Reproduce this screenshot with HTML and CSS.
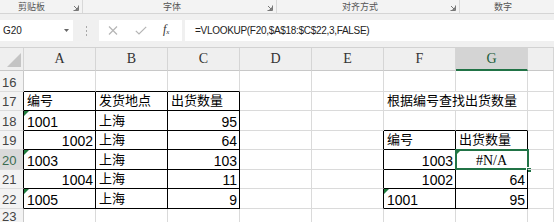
FILE: index.html
```html
<!DOCTYPE html>
<html>
<head>
<meta charset="utf-8">
<link rel="stylesheet" href="styles.css">
</head>
<body>
<div class="ribbon">
  <div class="grp g1"><span class="lbl">剪贴板</span><svg class="launch" width="6" height="6" viewBox="0 0 6 6"><path d="M0.5 5.5H5.5V0.5M1 1L4.5 4.5M4.5 2.5V4.5H2.5" fill="none" stroke="#777" stroke-width="1"/></svg></div>
  <div class="grp g2"><span class="lbl">字体</span><svg class="launch" width="6" height="6" viewBox="0 0 6 6"><path d="M0.5 5.5H5.5V0.5M1 1L4.5 4.5M4.5 2.5V4.5H2.5" fill="none" stroke="#777" stroke-width="1"/></svg></div>
  <div class="grp g3"><span class="lbl">对齐方式</span><svg class="launch" width="6" height="6" viewBox="0 0 6 6"><path d="M0.5 5.5H5.5V0.5M1 1L4.5 4.5M4.5 2.5V4.5H2.5" fill="none" stroke="#777" stroke-width="1"/></svg></div>
  <div class="grp g4"><span class="lbl">数字</span></div>
</div>
<div class="fbar">
  <div class="namebox"><span>G20</span><svg width="5" height="3" viewBox="0 0 5 3"><path d="M0 0H5L2.5 3Z" fill="#666"/></svg></div>
  <div class="dots"><i></i><i></i><i></i></div>
  <div class="fxbox">
    <svg class="ico" width="10" height="9" viewBox="0 0 10 9"><path d="M1 0.5L9 8.5M9 0.5L1 8.5" stroke="#b5b5b5" stroke-width="1.2" fill="none"/></svg>
    <svg class="ico" width="12" height="9" viewBox="0 0 12 9"><path d="M0.8 4.8L4 8L11.2 0.8" stroke="#b5b5b5" stroke-width="1.2" fill="none"/></svg>
    <span class="fx">f<sub>x</sub></span>
  </div>
  <div class="formula">=VLOOKUP(F20,$A$18:$C$22,3,FALSE)</div>
</div>
<div class="grid">
  <div class="h corner"><svg width="14" height="14" viewBox="0 0 14 14"><path d="M14 0V14H0Z" fill="#c4c4c4"/></svg></div>
  <div class="h">A</div><div class="h">B</div><div class="h">C</div><div class="h">D</div><div class="h">E</div><div class="h">F</div><div class="h hs">G</div><div class="h"></div>

  <div class="rh">16</div>
  <div class="c kb"></div><div class="c kb"></div><div class="c kb"></div><div class="c"></div><div class="c"></div><div class="c"></div><div class="c"></div><div class="c"></div>

  <div class="rh kr">17</div>
  <div class="c kr kb cn">编号</div><div class="c kr kb cn">发货地点</div><div class="c kr kb cn">出货数量</div><div class="c"></div><div class="c"></div><div class="c cn span2">根据编号查找出货数量</div><div class="c"></div>

  <div class="rh kr">18</div>
  <div class="c kr kb tri">1001</div><div class="c kr kb cn">上海</div><div class="c kr kb r">95</div><div class="c"></div><div class="c"></div><div class="c kb"></div><div class="c kb"></div><div class="c"></div>

  <div class="rh kr">19</div>
  <div class="c kr kb r">1002</div><div class="c kr kb cn">上海</div><div class="c kr kb r">64</div><div class="c"></div><div class="c kr"></div><div class="c kr kb cn">编号</div><div class="c kr kb cn">出货数量</div><div class="c"></div>

  <div class="rh kr rs">20</div>
  <div class="c kr kb tri">1003</div><div class="c kr kb cn">上海</div><div class="c kr kb r">103</div><div class="c"></div><div class="c kr"></div><div class="c kr kb r">1003</div><div class="c kr kb ctr tri sel"><span class="err">#N/A</span><span class="selbox"></span><span class="handle"></span></div><div class="c"></div>

  <div class="rh kr">21</div>
  <div class="c kr kb r">1004</div><div class="c kr kb cn">上海</div><div class="c kr kb r">11</div><div class="c"></div><div class="c kr"></div><div class="c kr kb r">1002</div><div class="c kr kb r">64</div><div class="c"></div>

  <div class="rh kr">22</div>
  <div class="c kr kb tri">1005</div><div class="c kr kb cn">上海</div><div class="c kr kb r">9</div><div class="c"></div><div class="c kr"></div><div class="c kr kb tri">1001</div><div class="c kr kb r">95</div><div class="c"></div>

  <div class="rh">23</div>
  <div class="c"></div><div class="c"></div><div class="c"></div><div class="c"></div><div class="c"></div><div class="c"></div><div class="c"></div><div class="c"></div>
</div>
</body>
</html>
```
FILE: styles.css
```css
* { box-sizing: border-box; }
body {
  margin: 0;
  width: 554px;
  height: 222px;
  overflow: hidden;
  background: #fff;
  font-family: "Liberation Sans", "Noto Sans CJK SC", sans-serif;
}
.ribbon {
  display: flex;
  height: 14px;
  background: #f3f3f3;
  border-bottom: 1px solid #d5d5d5;
  font-family: "Noto Sans CJK SC", sans-serif;
  font-size: 9px;
  line-height: 13px;
  color: #555;
}
.grp {
  display: flex;
  align-items: flex-start;
  height: 13px;
  border-right: 1px solid #d8d8d8;
}
.lbl { display: block; height: 13px; }
.launch { margin-left: auto; margin-right: 3px; margin-top: 5px; }
.g1 { width: 83px; padding-left: 18px; }
.g2 { width: 194px; padding-left: 80px; }
.g3 { width: 183px; padding-left: 65px; }
.g4 { flex: 1; padding-left: 34px; border-right: none; }

.fbar {
  display: flex;
  align-items: flex-start;
  height: 34px;
  padding-top: 6px;
  background: #f0f0f0;
  border-bottom: 1px solid #d2d2d2;
}
.namebox {
  width: 73px;
  height: 21px;
  background: #fff;
  display: flex;
  align-items: center;
  padding: 0 4px 0 3px;
  font-size: 10px;
  color: #222;
}
.namebox span { flex: 1; }
.dots {
  width: 26px;
  height: 21px;
  display: flex;
  flex-direction: column;
  align-items: center;
  justify-content: center;
  gap: 2px;
}
.dots i {
  display: block;
  width: 1px;
  height: 2px;
  background: #a8a8a8;
}
.fxbox {
  width: 83px;
  height: 21px;
  background: #fff;
  display: flex;
  align-items: center;
  padding-left: 9px;
}
.fxbox .ico:first-child { margin-right: 17px; }
.fxbox .ico:nth-child(2) { margin-right: 16px; }
.fx {
  font-family: "Liberation Serif", serif;
  font-style: italic;
  font-size: 12px;
  color: #333;
  line-height: 12px;
}
.fx sub { font-size: 7px; vertical-align: -1px; }
.formula {
  flex: 1;
  height: 21px;
  margin-left: 3px;
  background: #fff;
  padding-left: 10px;
  font-size: 10px;
  letter-spacing: -0.3px;
  line-height: 21px;
  color: #222;
}

.grid {
  display: grid;
  grid-template-columns: 24px repeat(7, 72px) 1fr;
  grid-template-rows: 23px 21px 19px 20px 19px 20px 19px 20px 1fr;
  height: 174px;
}
.h {
  background: #efefef;
  border-right: 1px solid #d5d5d5;
  border-bottom: 1px solid #c8c8c8;
  display: flex;
  align-items: center;
  justify-content: center;
  font-family: "Liberation Serif", serif;
  font-size: 14px;
  color: #333;
}
.corner { align-items: flex-end; justify-content: flex-end; padding: 0 2px 3px 0; }
.hs {
  background: #d4d4d4;
  border-bottom: 2px solid #217346;
  color: #1d5e3a;
}
.rh {
  background: #f3f3f3;
  border-right: 1px solid #c8c8c8;
  border-bottom: 1px solid #dcdcdc;
  display: flex;
  align-items: flex-end;
  padding-left: 2px;
  font-size: 13px;
  line-height: 16px;
  color: #444;
}
.rs { background: #d9d9d9; color: #3a6b50; }
.c {
  border-right: 1px solid #dadada;
  border-bottom: 1px solid #dadada;
  display: flex;
  align-items: flex-end;
  padding: 0 3px;
  font-size: 14px;
  line-height: 16px;
  color: #000;
  white-space: nowrap;
  position: relative;
}
.cn { font-size: 13px; padding-bottom: 1px; }
.span2 { grid-column: span 2; }
.r { justify-content: flex-end; padding-right: 2px; }
.ctr { justify-content: center; }
.kr { border-right-color: #000; }
.kb { border-bottom-color: #000; }
.err { font-family: "Liberation Serif", serif; font-size: 14px; }
.tri::before {
  content: "";
  position: absolute;
  left: 0;
  top: 0;
  border-style: solid;
  border-width: 5px 5px 0 0;
  border-color: #1e7b3c transparent transparent transparent;
}
.selbox {
  position: absolute;
  left: -1px;
  top: -1px;
  right: -2px;
  bottom: -1px;
  border: 2px solid #217346;
}
.handle {
  position: absolute;
  right: -5px;
  bottom: -4px;
  width: 6px;
  height: 6px;
  background: #217346;
  border: 1px solid #fff;
}
```
